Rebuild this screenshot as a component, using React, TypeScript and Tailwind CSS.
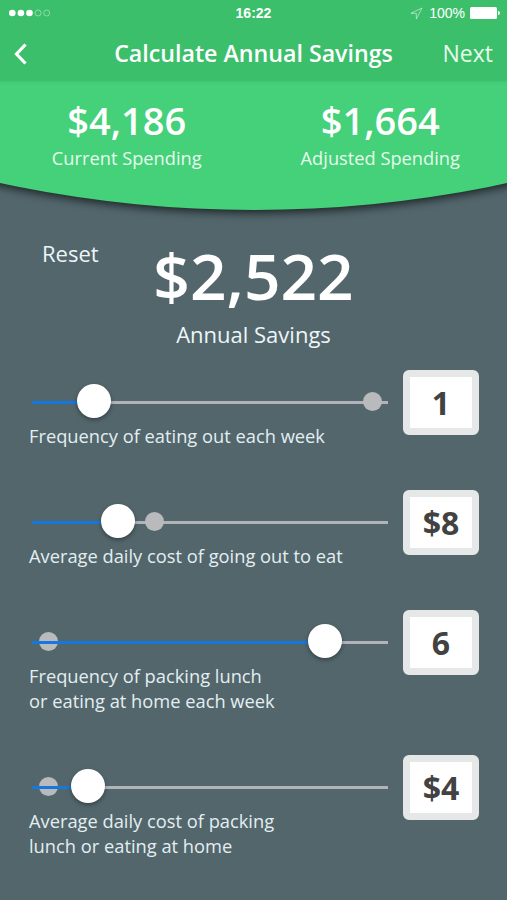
import React from "react";

type SliderRow = {
  label: string[];
  value: string;
  thumb: number;
  marker: number;
  fillOverMarker: boolean;
};

// thumb and marker are centre offsets along the 356px track
const rows: SliderRow[] = [
  {
    label: ["Frequency of eating out each week"],
    value: "1",
    thumb: 62,
    marker: 340,
    fillOverMarker: false,
  },
  {
    label: ["Average daily cost of going out to eat"],
    value: "$8",
    thumb: 86.4,
    marker: 122.4,
    fillOverMarker: false,
  },
  {
    label: ["Frequency of packing lunch", "or eating at home each week"],
    value: "6",
    thumb: 293,
    marker: 16,
    fillOverMarker: true,
  },
  {
    label: ["Average daily cost of packing", "lunch or eating at home"],
    value: "$4",
    thumb: 56,
    marker: 16,
    fillOverMarker: true,
  },
];

const StatusBar = () => (
  <div className="grid grid-cols-3 items-center h-[26px] pl-[9px] pr-[7px] font-['Liberation_Sans',sans-serif] text-sm">
    <svg width="44" height="8" viewBox="0 0 44 8">
      <circle cx="3.3" cy="4" r="3.3" fill="#fff" />
      <circle cx="11.9" cy="4" r="3.3" fill="#fff" />
      <circle cx="20.5" cy="4" r="3.3" fill="#fff" />
      <circle cx="29.1" cy="4" r="3" fill="none" stroke="#fff" strokeOpacity=".5" strokeWidth=".8" />
      <circle cx="37.7" cy="4" r="3" fill="none" stroke="#fff" strokeOpacity=".5" strokeWidth=".8" />
    </svg>
    <span className="-ml-[2px] text-center font-bold">16:22</span>
    <div className="flex items-center justify-end">
      <svg width="13" height="13" viewBox="0 0 13 13" className="mr-[6px]">
        <path d="M12 1 1 6.3h5.3V12z" fill="none" stroke="#fff" strokeOpacity=".65" strokeWidth=".8" />
      </svg>
      <span>100%</span>
      <svg width="30" height="12" viewBox="0 0 30 12" className="ml-[5px]">
        <rect width="27" height="12" rx="1.5" fill="#fff" />
        <path d="M28 4a2 2 0 0 1 0 4z" fill="#fff" />
      </svg>
    </div>
  </div>
);

const Spending = ({ amount, label }: { amount: string; label: string }) => (
  <div className="flex-1 text-center">
    <p className="text-[38px] leading-[44px] font-semibold">{amount}</p>
    <p className="mt-[2px] text-[18.25px] leading-[28px] text-[#e6fbea]">{label}</p>
  </div>
);

const Slider = ({ row }: { row: SliderRow }) => (
  <div className="flex items-start pl-[29px] pr-7">
    <div className="flex-1 pt-[14px]">
      <div className="relative ml-[3px] w-[356px] h-[34px]">
        <div className="absolute top-[17px] w-full h-[3px] bg-[#b1b3b8]" />
        {row.fillOverMarker && (
          <div
            className="absolute top-[8px] size-[19px] -ml-[9.5px] rounded-full bg-[#b9babb]"
            style={{ left: row.marker }}
          />
        )}
        <div className="absolute top-[17px] h-[3px] bg-[#1677dc]" style={{ width: row.thumb }} />
        {!row.fillOverMarker && (
          <div
            className="absolute top-[8px] size-[19px] -ml-[9.5px] rounded-full bg-[#b9babb]"
            style={{ left: row.marker }}
          />
        )}
        <div
          className="absolute top-0 size-[34px] -ml-[17px] rounded-full bg-white shadow-[0_2px_4px_rgba(0,0,0,0.35)]"
          style={{ left: row.thumb }}
        />
      </div>
      <p className="mt-[5px] text-[18.3px] leading-[25px] text-[#e4eef1]">
        {row.label.map((line) => (
          <span key={line} className="block whitespace-nowrap">
            {line}
          </span>
        ))}
      </p>
    </div>
    <div className="flex items-center justify-center w-[76px] h-[65px] rounded-md border-[7px] border-[#e6e7e7] bg-white text-[32px] leading-none font-bold text-[#424242]">
      {row.value}
    </div>
  </div>
);

const App: React.FC = () => {
  return (
    <div className="w-[507px] h-[900px] overflow-hidden bg-[#52666c] font-['Open_Sans',sans-serif] text-white">
      <div className="relative h-[239px] overflow-hidden">
        {/* bottom edge of a very large circle makes the shallow curve */}
        <div className="absolute bottom-[29px] left-1/2 size-[2406px] -translate-x-1/2 rounded-full bg-[#45d07a] shadow-[0_3px_9px_rgba(0,0,0,0.65)]" />
        <div className="relative">
          <header className="h-[81px] bg-[#3bbf6b] shadow-[0_1px_2px_rgba(59,191,107,0.8)]">
            <StatusBar />
            <nav className="grid grid-cols-[80px_1fr_80px] items-center h-[55px] px-[14px]">
              <svg width="14" height="22" viewBox="0 0 14 22">
                <path d="M11.5 1.5 2.5 11l9 9.5" fill="none" stroke="#fff" strokeWidth="3.2" />
              </svg>
              <h1 className="text-center text-[23.2px] font-semibold whitespace-nowrap">Calculate Annual Savings</h1>
              <button className="justify-self-end text-[23px] text-[#e6fbea]">Next</button>
            </nav>
          </header>
          <div className="flex pt-[17px]">
            <Spending amount="$4,186" label="Current Spending" />
            <Spending amount="$1,664" label="Adjusted Spending" />
          </div>
        </div>
      </div>

      <div className="relative h-[131px] text-center">
        <button className="absolute left-[42px] -top-[2px] text-[22px] leading-8 text-[#eef5f7]">Reset</button>
        <p className="pt-px text-[64px] leading-[72px] font-semibold">$2,522</p>
        <p className="mt-[6px] text-[22px] leading-8 text-[#eef5f7]">Annual Savings</p>
      </div>

      <div className="flex flex-col gap-[42px]">
        {rows.map((row) => (
          <Slider key={row.label[0]} row={row} />
        ))}
      </div>
    </div>
  );
};

export default App;
